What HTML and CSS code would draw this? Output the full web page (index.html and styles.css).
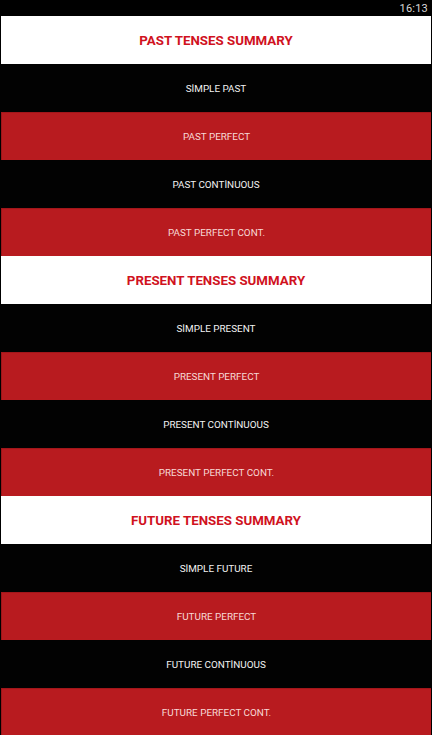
FILE: index.html
```html
<!DOCTYPE html>
<html lang="en">
<head>
    <meta charset="UTF-8">
    <meta name="viewport" content="width=device-width, initial-scale=1.0">
    <title>Tenses Summary</title>
    <link rel="stylesheet" href="styles.css">
</head>
<body>
    <div class="status-bar">
        <span class="clock">16:13</span>
    </div>

    <div class="menu">
        <div class="row header">PAST TENSES SUMMARY</div>
        <div class="row dark">SİMPLE PAST</div>
        <div class="row red">PAST PERFECT</div>
        <div class="row dark">PAST CONTİNUOUS</div>
        <div class="row red">PAST PERFECT CONT.</div>

        <div class="row header">PRESENT TENSES SUMMARY</div>
        <div class="row dark">SİMPLE PRESENT</div>
        <div class="row red">PRESENT PERFECT</div>
        <div class="row dark">PRESENT CONTİNUOUS</div>
        <div class="row red">PRESENT PERFECT CONT.</div>

        <div class="row header">FUTURE TENSES SUMMARY</div>
        <div class="row dark">SİMPLE FUTURE</div>
        <div class="row red">FUTURE PERFECT</div>
        <div class="row dark">FUTURE CONTİNUOUS</div>
        <div class="row red">FUTURE PERFECT CONT.</div>
    </div>
</body>
</html>
```

FILE: styles.css
```css
* {
    margin: 0;
    padding: 0;
    box-sizing: border-box;
}

body {
    background: #000000;
    font-family: Roboto, "Liberation Sans", sans-serif;
    width: 432px;
    height: 735px;
    overflow: hidden;
}

.status-bar {
    height: 16px;
    display: flex;
    justify-content: flex-end;
    align-items: center;
    padding-right: 4px;
    background: #000;
}

.clock {
    color: #d8d8d8;
    font-size: 11px;
    letter-spacing: 0.2px;
}

.menu {
    display: flex;
    flex-direction: column;
}

.row {
    height: 48px;
    display: flex;
    align-items: center;
    justify-content: center;
    font-size: 9.9px;
}

.header {
    background: #ffffff;
    color: #d0121e;
    font-size: 13.3px;
    font-weight: 700;
    margin: 0 1px;
}

.dark {
    background: #020202;
    color: #f2f2f2;
}

.red {
    background: #b81b1f;
    color: #f7d9d6;
    margin: 0 1px;
    border-top: 1px solid #a2161a;
    border-left: 1px solid #9e1519;
}
```
